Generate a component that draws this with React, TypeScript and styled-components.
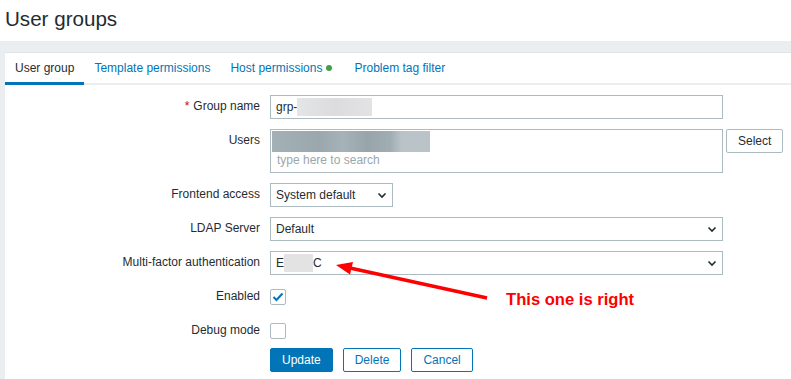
import styled, { createGlobalStyle } from "styled-components";

const Global = createGlobalStyle`
  html, body {
    margin: 0;
    padding: 0;
    background: #ffffff;
  }
  body {
    font-family: "Liberation Sans", Arial, sans-serif;
    font-size: 12px;
    color: #1f2c33;
  }
`;

const Page = styled.div`
  position: relative;
  width: 791px;
  height: 379px;
  overflow: hidden;
  background: #ebeef0;
`;

const Header = styled.header`
  height: 41px;
  background: #ffffff;
  display: flex;
  align-items: center;
  padding-left: 5px;
`;

const Title = styled.h1`
  margin: 0;
  font-size: 20.6px;
  font-weight: normal;
  color: #1f2c33;
  position: relative;
  top: -2px;
`;

const Panel = styled.main`
  margin: 11px 0 0 5px;
  background: #ffffff;
  border-top: 1px solid #dfe4e7;
  height: 400px;
`;

const Tabs = styled.nav`
  display: flex;
  height: 30px;
  border-bottom: 2px solid #ebeef0;
`;

const Tab = styled.div<{ $active?: boolean }>`
  display: flex;
  align-items: center;
  padding: 0 10px;
  color: ${(p) => (p.$active ? "#1f2c33" : "#0275b8")};
  border-bottom: 3px solid ${(p) => (p.$active ? "#0275b8" : "transparent")};
  margin-bottom: -2px;
  padding-top: 1px;
`;

const Dot = styled.span`
  width: 6px;
  height: 6px;
  border-radius: 50%;
  background: #429e47;
  margin: 0 2px 0 4px;
`;

const Form = styled.div`
  display: grid;
  grid-template-columns: 255px 1fr;
  column-gap: 10px;
  row-gap: 10px;
  padding-top: 10px;
`;

const Label = styled.label`
  text-align: right;
  line-height: 23px;
`;

const Required = styled.span`
  color: #d40000;
  margin-right: 4px;
`;

const Field = styled.div`
  display: flex;
  align-items: flex-start;
  min-height: 24px;
`;

const TextBox = styled.div<{ $width: number }>`
  box-sizing: border-box;
  width: ${(p) => p.$width}px;
  height: 24px;
  border: 1px solid #acbbc2;
  padding: 0 5px 1px;
  display: flex;
  align-items: center;
  position: relative;
`;

const Blur = styled.span<{ $w: number; $h: number; $bg: string }>`
  display: inline-block;
  width: ${(p) => p.$w}px;
  height: ${(p) => p.$h}px;
  background: ${(p) => p.$bg};
`;

const Multi = styled.div`
  box-sizing: border-box;
  width: 453px;
  height: 44px;
  border: 1px solid #acbbc2;
  padding: 1px 1px 0 1px;
`;

const Chips = styled.div`
  width: 158px;
  height: 21px;
  background: linear-gradient(
    90deg,
    #a3b0b6 0%,
    #9aa8ae 30%,
    #a6b2b8 45%,
    #97a5ab 60%,
    #a0adb3 75%,
    #b9c3c8 82%,
    #b9c3c8 100%
  );
`;

const Placeholder = styled.div`
  color: #9aa7ad;
  padding-left: 5px;
  line-height: 17px;
`;

const SelectButton = styled.button`
  all: unset;
  box-sizing: border-box;
  margin-left: 3px;
  height: 24px;
  padding: 0 11px 1px;
  border: 1px solid #acbbc2;
  border-radius: 2px;
  color: #1f2c33;
  font-family: inherit;
  font-size: 12px;
  display: flex;
  align-items: center;
`;

const Chevron = styled.svg`
  position: absolute;
  right: 5px;
  top: 8px;
`;

const Check = styled.div`
  box-sizing: border-box;
  width: 16px;
  height: 16px;
  border: 1px solid #acbbc2;
  border-radius: 2px;
  margin-top: 4px;
  display: flex;
  align-items: center;
  justify-content: center;
`;

const Actions = styled.div`
  display: flex;
  gap: 10px;
  margin-top: -5px;
`;

const Button = styled.button<{ $primary?: boolean }>`
  all: unset;
  box-sizing: border-box;
  height: 24px;
  padding: 0 11px 1px;
  border: 1px solid #0275b8;
  border-radius: 2px;
  background: ${(p) => (p.$primary ? "#0275b8" : "#ffffff")};
  color: ${(p) => (p.$primary ? "#ffffff" : "#0275b8")};
  font-family: inherit;
  font-size: 12px;
  display: flex;
  align-items: center;
`;

const Annotation = styled.svg`
  position: absolute;
  left: 0;
  top: 0;
  pointer-events: none;
`;

const Note = styled.div`
  position: absolute;
  left: 506px;
  top: 292px;
  font-size: 16.6px;
  line-height: 16px;
  font-weight: bold;
  color: #ff0000;
  white-space: nowrap;
`;

function Dropdown({ width, children }: { width: number; children: React.ReactNode }) {
  return (
    <TextBox $width={width}>
      {children}
      <Chevron width="10" height="7" viewBox="0 0 10 7">
        <path d="M1.5 1.5 L5 5 L8.5 1.5" fill="none" stroke="#1f2c33" strokeWidth="1.6" />
      </Chevron>
    </TextBox>
  );
}

function Checkbox({ checked }: { checked?: boolean }) {
  return (
    <Check>
      {checked && (
        <svg width="12" height="10" viewBox="0 0 12 10">
          <path d="M1.5 5 L4.5 8 L10.5 1.5" fill="none" stroke="#0275b8" strokeWidth="2" />
        </svg>
      )}
    </Check>
  );
}

export default function App() {
  return (
    <Page>
      <Global />
      <Header>
        <Title>User groups</Title>
      </Header>
      <Panel>
        <Tabs>
          <Tab $active>User group</Tab>
          <Tab>Template permissions</Tab>
          <Tab>
            Host permissions
            <Dot />
          </Tab>
          <Tab>Problem tag filter</Tab>
        </Tabs>
        <Form>
          <Label>
            <Required>*</Required>Group name
          </Label>
          <Field>
            <TextBox $width={453}>
              grp-
              <Blur $w={75} $h={18} $bg="linear-gradient(90deg,#e4e5e7,#dcdcdf 50%,#e3e3e6)" />
            </TextBox>
          </Field>

          <Label>Users</Label>
          <Field>
            <Multi>
              <Chips />
              <Placeholder>type here to search</Placeholder>
            </Multi>
            <SelectButton>Select</SelectButton>
          </Field>

          <Label>Frontend access</Label>
          <Field>
            <Dropdown width={123}>System default</Dropdown>
          </Field>

          <Label>LDAP Server</Label>
          <Field>
            <Dropdown width={453}>Default</Dropdown>
          </Field>

          <Label>Multi-factor authentication</Label>
          <Field>
            <Dropdown width={453}>
              E<Blur $w={29} $h={18} $bg="#e3e3e4" />C
            </Dropdown>
          </Field>

          <Label>Enabled</Label>
          <Field>
            <Checkbox checked />
          </Field>

          <Label>Debug mode</Label>
          <Field>
            <Checkbox />
          </Field>

          <span />
          <Actions>
            <Button $primary>Update</Button>
            <Button>Delete</Button>
            <Button>Cancel</Button>
          </Actions>
        </Form>
      </Panel>

      <Annotation width="791" height="379" viewBox="0 0 791 379">
        <line x1="487" y1="298" x2="350" y2="268" stroke="#ff0000" strokeWidth="3.5" />
        <polygon points="336,265 353,262 350,274.5" fill="#ff0000" />
      </Annotation>
      <Note>This one is right</Note>
    </Page>
  );
}
